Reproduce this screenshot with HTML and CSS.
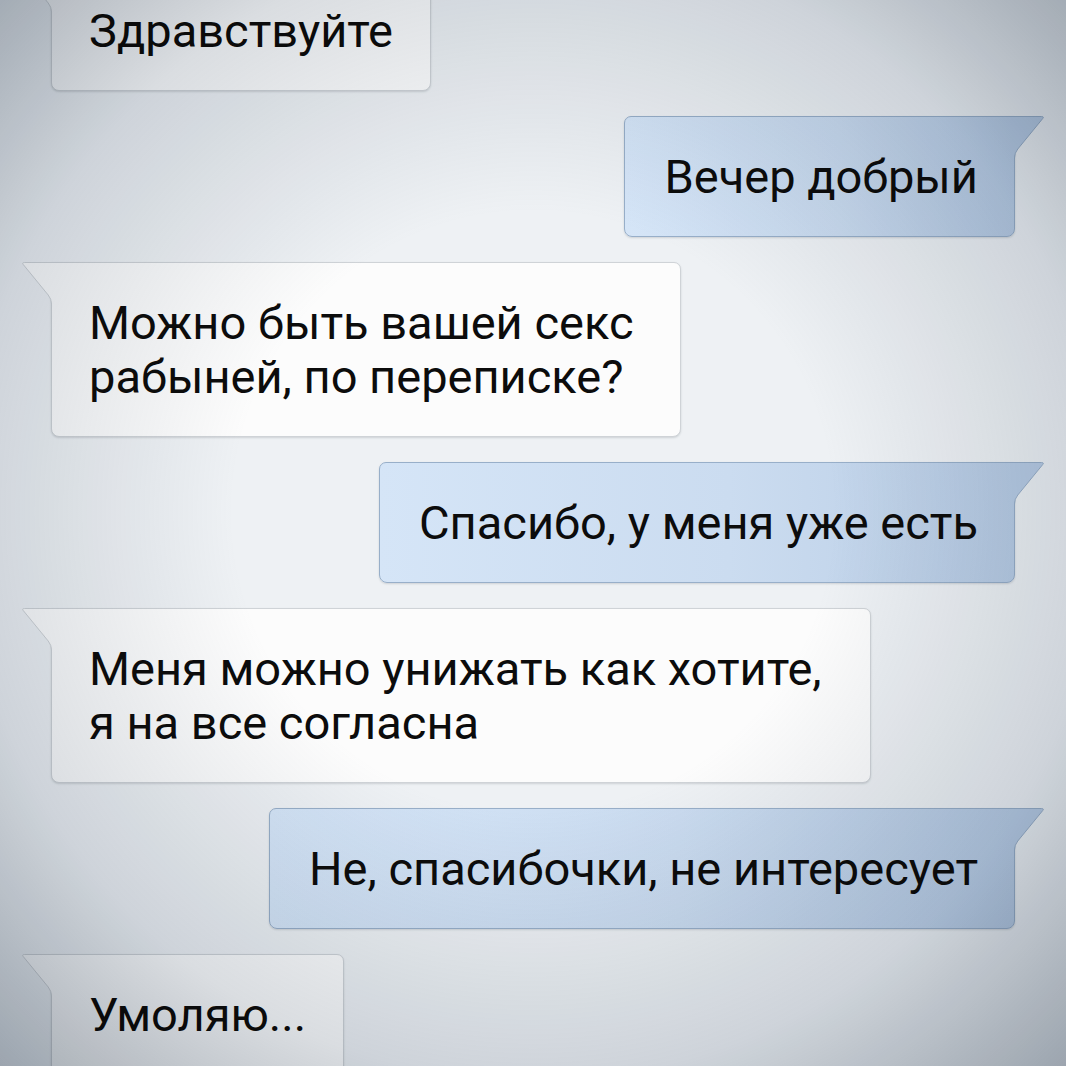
FILE: index.html
```html
<!DOCTYPE html>
<html lang="ru">
<head>
<meta charset="utf-8">
<title>Переписка</title>
<link rel="stylesheet" href="styles.css">
</head>
<body>
<main class="chat">
  <div class="msg msg-in">
    <svg class="tail" viewBox="0 0 34 46" width="34" height="46" aria-hidden="true">
      <path class="tail-fill" d="M34 0.5 L3.5 0.5 Q0.6 0.5 2.3 2.6 L27.2 33 Q30.5 37 30.5 42 L30.5 46 L34 46 Z"/>
      <path class="tail-line" d="M34 0.5 L3.5 0.5 Q0.6 0.5 2.3 2.6 L27.2 33 Q30.5 37 30.5 42 L30.5 46"/>
    </svg>
    Здравствуйте
  </div>

  <div class="msg msg-out">
    <svg class="tail" viewBox="0 0 34 46" width="34" height="46" aria-hidden="true">
      <path class="tail-fill" d="M34 0.5 L3.5 0.5 Q0.6 0.5 2.3 2.6 L27.2 33 Q30.5 37 30.5 42 L30.5 46 L34 46 Z"/>
      <path class="tail-line" d="M34 0.5 L3.5 0.5 Q0.6 0.5 2.3 2.6 L27.2 33 Q30.5 37 30.5 42 L30.5 46"/>
    </svg>
    Вечер добрый
  </div>

  <div class="msg msg-in msg-w630">
    <svg class="tail" viewBox="0 0 34 46" width="34" height="46" aria-hidden="true">
      <path class="tail-fill" d="M34 0.5 L3.5 0.5 Q0.6 0.5 2.3 2.6 L27.2 33 Q30.5 37 30.5 42 L30.5 46 L34 46 Z"/>
      <path class="tail-line" d="M34 0.5 L3.5 0.5 Q0.6 0.5 2.3 2.6 L27.2 33 Q30.5 37 30.5 42 L30.5 46"/>
    </svg>
    Можно быть вашей секс<br>рабыней, по переписке?
  </div>

  <div class="msg msg-out">
    <svg class="tail" viewBox="0 0 34 46" width="34" height="46" aria-hidden="true">
      <path class="tail-fill" d="M34 0.5 L3.5 0.5 Q0.6 0.5 2.3 2.6 L27.2 33 Q30.5 37 30.5 42 L30.5 46 L34 46 Z"/>
      <path class="tail-line" d="M34 0.5 L3.5 0.5 Q0.6 0.5 2.3 2.6 L27.2 33 Q30.5 37 30.5 42 L30.5 46"/>
    </svg>
    Спасибо, у меня уже есть
  </div>

  <div class="msg msg-in msg-w820">
    <svg class="tail" viewBox="0 0 34 46" width="34" height="46" aria-hidden="true">
      <path class="tail-fill" d="M34 0.5 L3.5 0.5 Q0.6 0.5 2.3 2.6 L27.2 33 Q30.5 37 30.5 42 L30.5 46 L34 46 Z"/>
      <path class="tail-line" d="M34 0.5 L3.5 0.5 Q0.6 0.5 2.3 2.6 L27.2 33 Q30.5 37 30.5 42 L30.5 46"/>
    </svg>
    Меня можно унижать как хотите,<br>я на все согласна
  </div>

  <div class="msg msg-out">
    <svg class="tail" viewBox="0 0 34 46" width="34" height="46" aria-hidden="true">
      <path class="tail-fill" d="M34 0.5 L3.5 0.5 Q0.6 0.5 2.3 2.6 L27.2 33 Q30.5 37 30.5 42 L30.5 46 L34 46 Z"/>
      <path class="tail-line" d="M34 0.5 L3.5 0.5 Q0.6 0.5 2.3 2.6 L27.2 33 Q30.5 37 30.5 42 L30.5 46"/>
    </svg>
    Не, спасибочки, не интересует
  </div>

  <div class="msg msg-in">
    <svg class="tail" viewBox="0 0 34 46" width="34" height="46" aria-hidden="true">
      <path class="tail-fill" d="M34 0.5 L3.5 0.5 Q0.6 0.5 2.3 2.6 L27.2 33 Q30.5 37 30.5 42 L30.5 46 L34 46 Z"/>
      <path class="tail-line" d="M34 0.5 L3.5 0.5 Q0.6 0.5 2.3 2.6 L27.2 33 Q30.5 37 30.5 42 L30.5 46"/>
    </svg>
    Умоляю...
  </div>
</main>
<div class="vignette"></div>
</body>
</html>
```

FILE: styles.css
```css
html, body {
  margin: 0;
  padding: 0;
}

body {
  width: 1066px;
  height: 1066px;
  overflow: hidden;
  background: #eef1f4;
  font-family: Roboto, "Noto Sans", "DejaVu Sans", sans-serif;
  color: #0c0c0c;
}

.chat {
  display: flex;
  flex-direction: column;
  align-items: flex-start;
  gap: 25px;
  margin-top: -30px;
  padding: 0 51px;
}

.msg {
  position: relative;
  box-sizing: border-box;
  padding: 32.5px 37px;
  font-size: 47px;
  line-height: 54px;
  white-space: nowrap;
  border: 1px solid;
  border-radius: 0 7px 8px 8px;
  box-shadow: 0 1px 2px rgba(60, 70, 80, 0.18);
}

.msg-w630 {
  width: 630px;
}

.msg-w820 {
  width: 820px;
}

/* incoming: white bubble, tail on the top-left */
.msg-in {
  background: #fcfcfc;
  border-color: #cfd3d7;
}

.msg-in .tail-fill {
  fill: #fcfcfc;
}

.msg-in .tail-line {
  stroke: #cfd3d7;
}

/* outgoing: blue bubble, tail on the top-right */
.msg-out {
  align-self: flex-end;
  padding: 32.5px 36px 32.5px 39px;
  border-radius: 7px 0 8px 8px;
  background: linear-gradient(90deg, #d5e5f7 0%, #cbdcf0 55%, #b9cde5 100%);
  border-color: #98afc9;
}

.msg-out .tail-fill {
  fill: #b9cde5;
}

.msg-out .tail-line {
  stroke: #98afc9;
}

.tail {
  position: absolute;
  top: -1px;
  left: -31px;
  overflow: visible;
}

.tail-line {
  fill: none;
  stroke-width: 1;
}

.msg-out .tail {
  left: auto;
  right: -31px;
  transform: scaleX(-1);
}

/* soft darkening towards the edges of the screen */
.vignette {
  position: fixed;
  inset: 0;
  pointer-events: none;
  background: radial-gradient(ellipse 74% 74% at 50% 48%, rgba(255, 255, 255, 0) 38%, rgba(100, 115, 132, 0.22) 72%, rgba(70, 85, 102, 0.5) 100%);
  mix-blend-mode: multiply;
}
```
